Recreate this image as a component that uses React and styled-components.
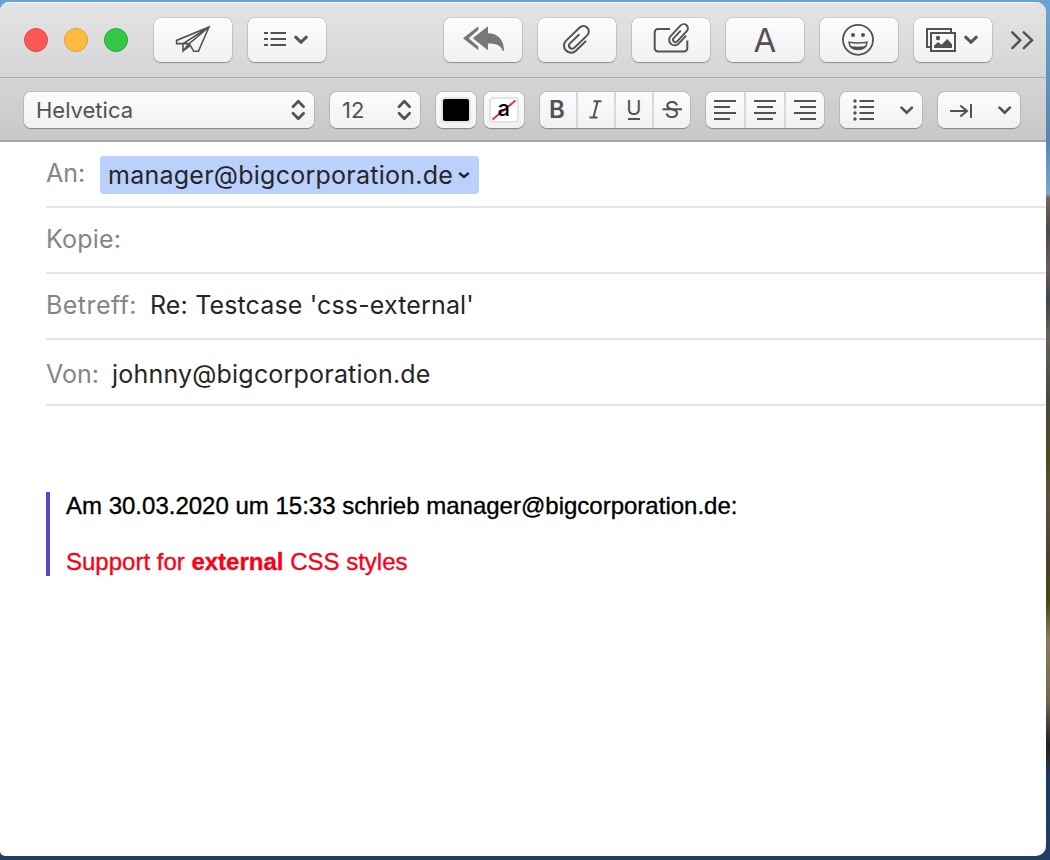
import React from 'react';
import styled, { createGlobalStyle } from 'styled-components';

const GlobalStyle = createGlobalStyle`
  * { box-sizing: border-box; }
  body { margin: 0; overflow: hidden; }
`;

const ink = '#525252';

const Desktop = styled.div`
  width: 1050px;
  height: 860px;
  padding: 2px 4px 4px 0;
  overflow: hidden;
  background:
    linear-gradient(#66a2d3, #66a2d3) 0 0 / 100% 3px no-repeat,
    linear-gradient(#213f62, #213f62) 0 100% / 100% 8px no-repeat,
    linear-gradient(#6aa5d8 0, #5c83b0 140px, #7ba6d0 194px, #7a6258 198px, #4c4a50 230px,
      #685c5c 268px, #3f454b 300px, #66605a 335px, #47493f 400px, #50491f 460px,
      #5e513c 500px, #4b3f25 560px, #464716 600px, #8f7a5e 640px, #75664c 700px,
      #201f20 745px, #2b2a30 760px, #1c3a60 775px, #213f62 860px);
`;

const Window = styled.div`
  width: 1046px;
  height: 854px;
  display: flex;
  flex-direction: column;
  overflow: hidden;
  border-radius: 9px 10px 10px 5px;
  background: #fff;
  font-family: Inter, "Liberation Sans", sans-serif;
`;

const Toolbars = styled.div`
  height: 140px;
  flex: none;
  border-bottom: 2px solid #a3a3a3;
  background: linear-gradient(#e4e4e4, #c8c8c8);
`;

const TitleBar = styled.div`
  height: 76px;
  display: flex;
  align-items: flex-start;
  gap: 16px;
  padding: 15px 12px 0 24px;
  border-top: 1px solid #f3f3f3;
  border-bottom: 1px solid #a9a9a9;
`;

const FormatBar = styled.div`
  display: flex;
  align-items: flex-start;
  padding: 14px 0 0 24px;
`;

const Lights = styled.div`
  display: flex;
  gap: 16px;
  padding-top: 10px;
  margin-right: 10px;
`;

const Light = styled.span`
  width: 24px;
  height: 24px;
  border-radius: 50%;
  background: ${(p) => p.$fill};
  border: 1px solid ${(p) => p.$edge};
`;

const Control = styled.div`
  display: flex;
  flex: none;
  align-items: center;
  overflow: hidden;
  width: ${(p) => p.$w}px;
  height: ${(p) => p.$h || 36}px;
  margin-left: ${(p) => p.$ml || 0}px;
  border-radius: 7px;
  background: linear-gradient(#fcfcfc, #f1f1f1);
  box-shadow: 0 0 0 1px rgba(0, 0, 0, 0.09), 0 1px 1px rgba(0, 0, 0, 0.28);
  color: ${ink};
`;

const Glyph = styled.svg`
  display: block;
  flex: none;
  fill: none;
  overflow: visible;
  stroke: ${(p) => p.$color || ink};
  stroke-width: ${(p) => p.$stroke || 2};
  margin-right: ${(p) => p.$mr || 0}px;
`;

const FontA = styled.span`
  width: 100%;
  text-align: center;
  font-size: 33px;
  line-height: 44px;
`;

const SelectLabel = styled.span`
  flex: 1;
  padding-left: 12px;
  font-size: 22px;
`;

const Swatch = styled.span`
  width: 30px;
  height: 26px;
  margin: 0 auto;
  border: 2px solid #e4e4e4;
  border-radius: 4px;
  background: ${(p) => p.$fill};
`;

const SwatchText = styled.text`
  font: 500 22px Inter, sans-serif;
  fill: #000;
  stroke: none;
`;

const Segment = styled.span`
  display: flex;
  justify-content: center;
  flex: 1;
  height: 36px;
  & + & { border-left: 2px solid #d9d9d9; }
`;

const SegText = styled.text`
  font: ${(p) => p.$weight || 400} ${(p) => p.$size || 24}px Inter, sans-serif;
  fill: ${ink};
  stroke: none;
  text-anchor: middle;
`;

const Fields = styled.div`
  padding-left: 46px;
  flex: none;
`;

const Field = styled.div`
  height: 66px;
  display: flex;
  align-items: flex-start;
  padding-top: ${(p) => p.$top}px;
  border-bottom: 2px solid #e5e5e5;
  font-size: 25px;
  line-height: 32px;
`;

const Label = styled.span`
  width: ${(p) => p.$w}px;
  padding-top: ${(p) => p.$drop || 0}px;
  flex: none;
  color: #858585;
  letter-spacing: ${(p) => p.$ls || 0}px;
  white-space: nowrap;
`;

const Value = styled.span`
  color: #262626;
  letter-spacing: ${(p) => p.$ls || 0}px;
  white-space: nowrap;
`;

const Chip = styled.span`
  display: flex;
  align-items: center;
  justify-content: space-between;
  width: 379px;
  height: 38px;
  padding: 0 8px;
  border-radius: 4px;
  background: #bad0fd;
`;

const Quote = styled.blockquote`
  margin: 86px 0 0 46px;
  padding-left: 16px;
  border-left: 4px solid #504bc8;
  font: 24px/28px "Liberation Sans", Arial, sans-serif;
  color: #000;
  white-space: nowrap;
`;

const Line = styled.p`
  margin: ${(p) => p.$gap || 0}px 0 0;
  color: ${(p) => p.$color || '#000'};
  -webkit-text-stroke: 0.35px currentColor;
`;

const Icon = ({ w = 78, h = 44, children, ...rest }) => (
  <Glyph width={w} height={h} viewBox={`0 0 ${w} ${h}`} {...rest}>{children}</Glyph>
);

const ClipPath = 'M7-5.6V8.6a7 7 0 0 1-14 0V-10.2a5.4 5.4 0 0 1 10.8 0V7.8a3.1 3.1 0 0 1-6.2 0V-5.4';

const Stepper = () => (
  <Icon w={14} h={22} $stroke={2.7} $mr={9} strokeLinecap="round" strokeLinejoin="round">
    <path d="M2 7.7L7.3 2.3 12.6 7.7M2 14.3L7.3 19.7 12.6 14.3" />
  </Icon>
);

const Bars = ({ x, short }) => (
  <Icon w={38} h={36}>
    <path d={`M${x} 9h22M${x + short} 15h16M${x} 21h22M${x + short} 27h16`} />
  </Icon>
);

export default function App() {
  return (
    <Desktop>
      <GlobalStyle />
      <Window>
        <Toolbars>
          <TitleBar>
            <Lights>
              <Light $fill="#fc5753" $edge="#df4744" />
              <Light $fill="#fdbc40" $edge="#de9f34" />
              <Light $fill="#33c748" $edge="#27aa35" />
            </Lights>
            <Control $w={78} $h={44}>
              <Icon $stroke={1.6}>
                <path d="M55 9L22.6 22.4V25.6H29L55 9L35.2 25.6L39.8 33.3H44.4ZM29 25.6V33L35.8 27.8M29 25.6H35.2L29 33" />
              </Icon>
            </Control>
            <Control $w={78} $h={44}>
              <Icon>
                <path d="M16 15h4M16 21h4M16 27h4M22.5 15H38M22.5 21H38M22.5 27H38" />
                <path d="M47.7 19.2L53 24.2 58.3 19.2" strokeWidth="3" strokeLinecap="round" />
              </Icon>
            </Control>
            <Control $w={78} $h={44} $ml={102}>
              <Icon>
                <g fill="#777" stroke="none">
                  <path d="M19 20.3L34.3 8.3V12L24.7 20.3L34.3 28.6V32.3Z" />
                  <path d="M28.7 20.3L44 8.3V15.2C53 15.4 60 20.5 60 32.7H58.6C57 27.2 53 25.3 44 25.4V32.3Z" />
                </g>
              </Icon>
            </Control>
            <Control $w={78} $h={44}>
              <Icon>
                <path transform="translate(39.2 21.7) rotate(46)" d={ClipPath} />
              </Icon>
            </Control>
            <Control $w={78} $h={44}>
              <Icon>
                <path d="M38 11H26a3.3 3.3 0 0 0-3.3 3.3V30.2a3.3 3.3 0 0 0 3.3 3.3H52a3.3 3.3 0 0 0 3.3-3.3V22.5" />
                <path transform="translate(47.2 17) rotate(43) scale(.78)" strokeWidth="2.4" d={ClipPath} />
              </Icon>
            </Control>
            <Control $w={78} $h={44}><FontA>A</FontA></Control>
            <Control $w={78} $h={44}>
              <Icon>
                <circle cx="38" cy="21.8" r="15" strokeWidth="1.8" />
                <circle cx="33" cy="17" r="2" fill={ink} stroke="none" />
                <circle cx="43" cy="17" r="2" fill={ink} stroke="none" />
                <path d="M29 24.2C34 25 42 25 47 24.2C46.6 29 43 31.6 38 31.6S29.4 29 29 24.2Z" strokeWidth="1.5" />
                <path d="M30.5 27.8C34.5 29 41.5 29 45.5 27.8C44 30.8 41.8 31.8 38 31.8S32 30.8 30.5 27.8Z" fill={ink} stroke="none" />
              </Icon>
            </Control>
            <Control $w={78} $h={44}>
              <Icon>
                <path d="M16 29H13V11H37V14" />
                <rect x="17" y="15" width="24" height="18" />
                <circle cx="24" cy="20" r="2.2" fill={ink} stroke="none" />
                <path d="M20 30V27.7L24 24L27.5 26.8L33.3 21L38 26.3V30Z" fill={ink} stroke="none" />
                <path d="M51.7 19.2L57 24.2 62.3 19.2" strokeWidth="3" strokeLinecap="round" />
              </Icon>
            </Control>
            <Icon w={28} h={44} $stroke={2.5} strokeLinecap="round">
              <path d="M4.3 14.3L12.2 22.2 4.3 30.1M15.8 14.3L24 22.2 15.8 30.1" />
            </Icon>
          </TitleBar>
          <FormatBar>
            <Control $w={290}><SelectLabel>Helvetica</SelectLabel><Stepper /></Control>
            <Control $w={90} $ml={16}><SelectLabel>12</SelectLabel><Stepper /></Control>
            <Control $w={40} $ml={16}><Swatch $fill="#000" /></Control>
            <Control $w={40} $ml={8}>
              <Swatch $fill="#fff">
                <Icon w={26} h={22}>
                  <path d="M1.5 20.5L24.5 1.5" stroke="#f22b35" />
                  <SwatchText x="6.5" y="17.3">a</SwatchText>
                </Icon>
              </Swatch>
            </Control>
            <Control $w={150} $ml={16}>
              <Segment><Icon w={34} h={36}><SegText x="16" y="26.3" $weight={600}>B</SegText></Icon></Segment>
              <Segment>
                <Icon w={34} h={36}><path d="M14.5 9.2H22.5M10.5 25.4H18.5M18.6 9.2L14.5 25.4" /></Icon>
              </Segment>
              <Segment><Icon w={34} h={36}><SegText x="17" y="23" $size={20.5}>U</SegText><path d="M11 27H23" /></Icon></Segment>
              <Segment><Icon w={34} h={36}><SegText x="17" y="25.7" $size={23}>S</SegText><path d="M7.5 17.3H27" /></Icon></Segment>
            </Control>
            <Control $w={118} $ml={16}>
              <Segment><Bars x={8} short={0} /></Segment>
              <Segment><Bars x={8} short={3} /></Segment>
              <Segment><Bars x={8} short={6} /></Segment>
            </Control>
            <Control $w={82} $ml={16}>
              <Icon w={82} h={36}>
                <path d="M19.5 9H34M19.5 15H34M19.5 21H34M19.5 27H34" />
                {[9, 15, 21, 27].map((y) => <circle key={y} cx="15" cy={y} r="1.7" fill={ink} stroke="none" />)}
                <path d="M61.5 15.6L66.7 20.6 71.9 15.6" strokeWidth="2.7" strokeLinecap="round" />
              </Icon>
            </Control>
            <Control $w={82} $ml={16}>
              <Icon w={82} h={36}>
                <path d="M12 19H29M22.3 13.5L29 19 22.3 24.5M33 12V26" />
                <path d="M61.5 15.6L66.7 20.6 71.9 15.6" strokeWidth="2.7" strokeLinecap="round" />
              </Icon>
            </Control>
          </FormatBar>
        </Toolbars>
        <Fields>
          <Field $top={14}>
            <Label $w={54} $drop={1}>An:</Label>
            <Chip>
              <Value $ls={0.25}>manager@bigcorporation.de</Value>
              <Icon w={12} h={10} $color="#222" $stroke={2.3} $mr={1}><path d="M1.2 3L6 7 10.8 3" /></Icon>
            </Chip>
          </Field>
          <Field $top={15}><Label $w={80} $ls={0.2}>Kopie:</Label></Field>
          <Field $top={15}><Label $w={104} $ls={0.45}>Betreff:</Label><Value $ls={0.15}>Re: Testcase 'css-external'</Value></Field>
          <Field $top={18}><Label $w={66}>Von:</Label><Value $ls={0.2}>johnny@bigcorporation.de</Value></Field>
        </Fields>
        <Quote>
          <Line>Am 30.03.2020 um 15:33 schrieb manager@bigcorporation.de:</Line>
          <Line $gap={28} $color="#fb0019">Support for <b>external</b> CSS styles</Line>
        </Quote>
      </Window>
    </Desktop>
  );
}
